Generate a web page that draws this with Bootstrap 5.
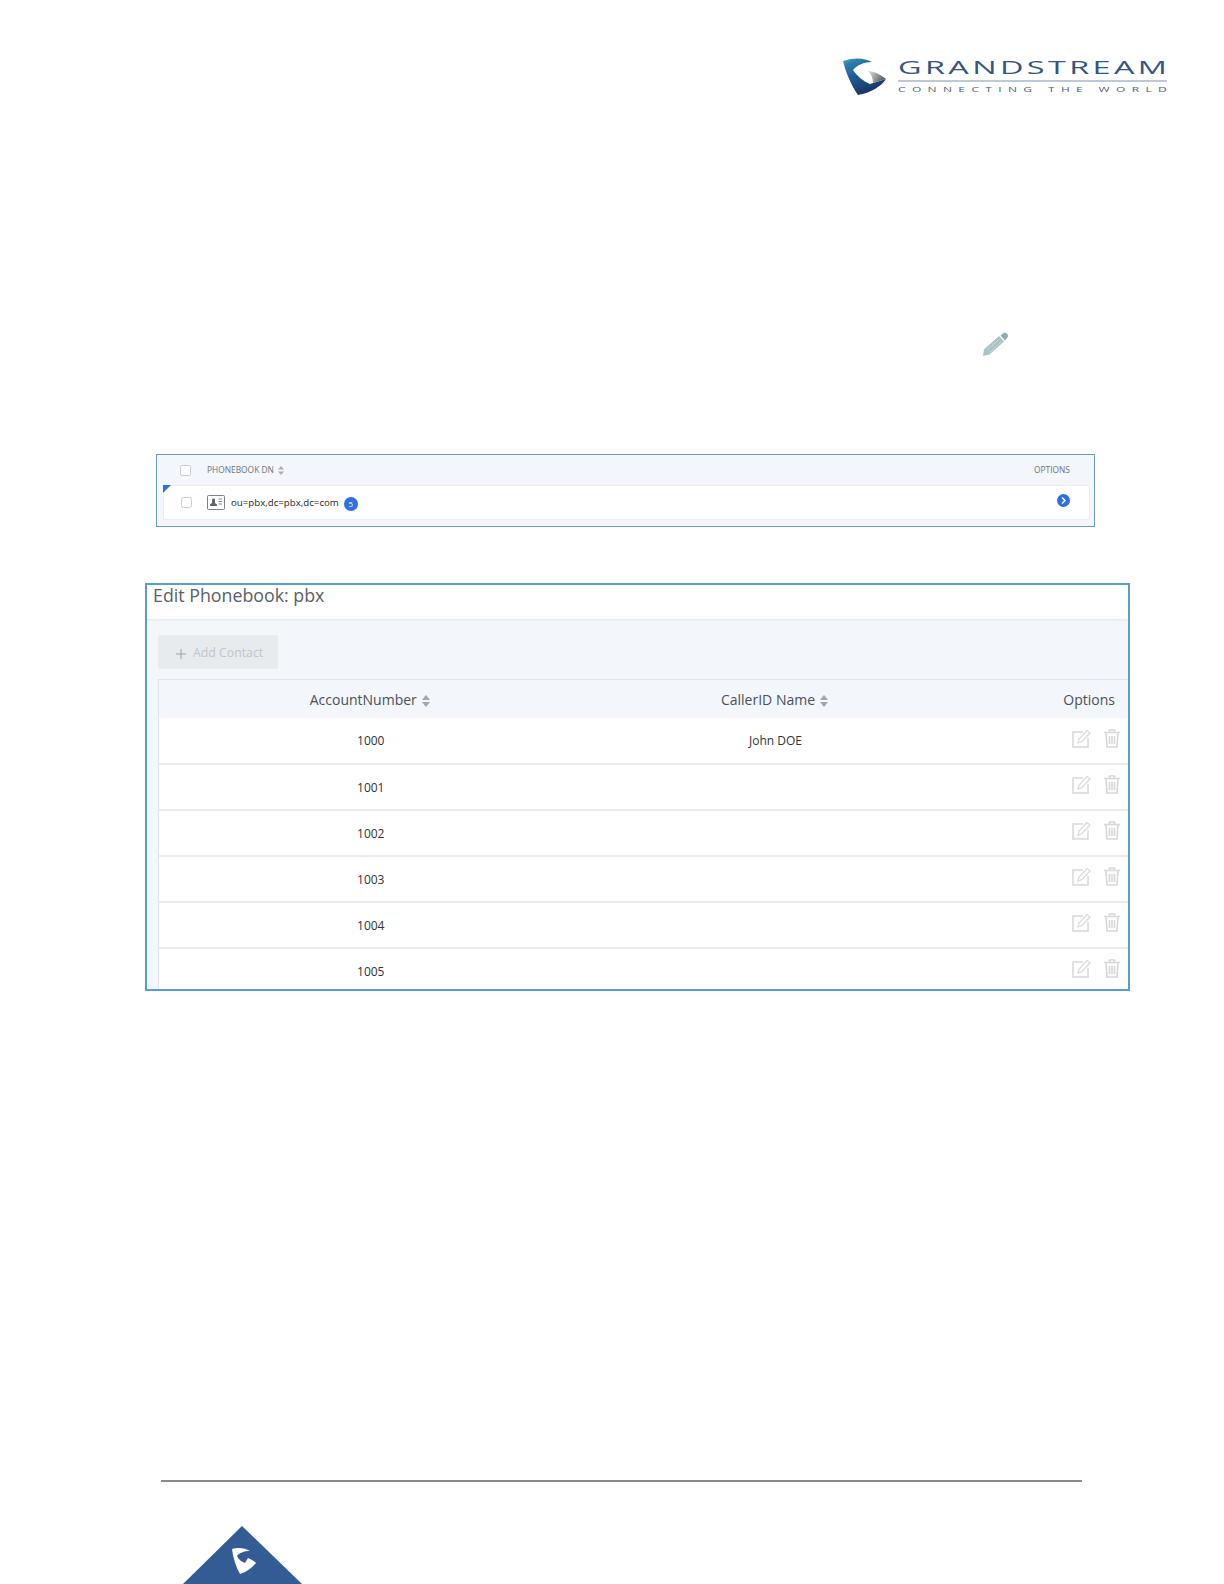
<!DOCTYPE html>
<html lang="en">
<head>
<meta charset="utf-8">
<title>Edit Phonebook</title>
<link href="https://cdn.jsdelivr.net/npm/bootstrap@5.3.0/dist/css/bootstrap.min.css" rel="stylesheet">
<style>
html,body{margin:0;background:#fff}
.sheet{width:1224px;height:1584px;overflow:hidden;font-family:"Open Sans","Liberation Sans",sans-serif;padding-top:52px}
.logo-wrap{margin-left:840px;height:46px}
.logo-wrap svg{display:block}
.pen-wrap{margin:234px 0 0 983px;height:24px}
.pen-wrap svg,.foot-mark svg{display:block}
.ldap-panel{margin:98px 0 0 156px;width:939px;height:73px;border:1.5px solid #6b9ab8;background:#f3f6fa;padding:0 4px 0 6px}
.ldap-head{height:30px;font-size:8.4px;color:#6d7580}
.ldap-row{position:relative;height:35px;background:#fff;border:1px solid #e8edf2;border-radius:2px;font-size:9.7px;color:#23282d}
.ldap-row::before{content:"";position:absolute;left:-1px;top:-1px;border-style:solid;border-width:8px 8px 0 0;border-color:#2f6fe4 transparent transparent transparent}
.ldap-check{width:11px;height:11px;margin:0 15px 0 17px!important;flex:none;border-color:#c9cdd2;border-radius:1px;background-color:#fff}
.ldap-head .ldap-check{margin:0 16px 0 17px!important}
.ldap-row .ldap-check{margin-top:-1px!important}
.dn-ico{margin-right:6px;flex:none}
.dn-text{margin-top:2px}
.dn-count{width:14px;height:14px;border-radius:50%;background:#2f6fe4;color:#fff;font-size:8px;line-height:14px;text-align:center;margin:3px 0 0 5px}
.opt-cell{margin-left:auto;margin-right:21px;width:35px;text-align:right}
.row-opt{margin:0 19px 5px auto}
.sort-ico{margin-left:5px;flex:none}
.ldap-head .sort-ico{margin-left:4px}
.edit-panel{margin:56px 0 0 145px;width:985px;height:408px;border:2px solid #5b9bd5;background:#f3f6fa;overflow:hidden}
.edit-title{height:35px;background:#fff;border-bottom:1px solid #e9ecef;padding-left:6px;font-size:17.8px;line-height:21px;color:#5a6067;box-shadow:0 1px 2px rgba(0,0,0,.03)}
.edit-body{padding:15px 0 0 11px}
.add-btn{width:120px;height:34px;background:#e8ebee!important;border:0!important;border-radius:2px;color:#bfc5ca!important;opacity:1!important;font-size:12.3px;padding:3px 0 0 18px;margin-bottom:10px}
.add-btn svg{margin-right:7px}
.contact-table{table-layout:fixed;width:970px;margin:0;font-size:12px;border-top:1px solid #dfe4ea;border-left:1px solid #dfe4ea;--bs-table-bg:transparent}
.contact-table th{height:38px;background:#f3f6fa;font-weight:400;font-size:14px;color:#4b5158;text-align:center;vertical-align:middle;padding:1px 4px 0 0;border:0}
.contact-table td{height:46px;background:#fff;color:#2e3338;text-align:center;vertical-align:middle;padding:2px 2px 0 0;border:0;border-bottom:2px solid #e7e9ec}
.contact-table .opts-col{text-align:right}
.contact-table td.opts-col{padding:2px 8px 0 0}
.contact-table td.opts-col svg{margin-left:13px;vertical-align:-1px;position:relative;top:-1px}
.contact-table th.opts-col{padding-right:13px}
.foot-rule{margin:489px 0 0 161px;width:921px;height:2px;background:#8a8a8a;border:0;opacity:1}
.foot-mark{margin:44px 0 0 183px}
</style>
</head>
<body>
<main class="sheet">
  <div class="logo-wrap">
    <svg width="332" height="46" viewBox="0 0 332 46" aria-label="Grandstream logo">
      <defs>
        <linearGradient id="lg1" x1="0" y1="0" x2="0.5" y2="1">
          <stop offset="0" stop-color="#62b3c4"/><stop offset=".16" stop-color="#2d7fae"/><stop offset=".5" stop-color="#1f5b97"/><stop offset="1" stop-color="#163660"/>
        </linearGradient>
        <linearGradient id="lg2" x1="0" y1="0" x2="1" y2="0.4">
          <stop offset="0" stop-color="#e2e4e6"/><stop offset="1" stop-color="#565d63"/>
        </linearGradient>
      </defs>
      <path d="M3 9 C14 5 25 6 32 10 C24 10 17 13 13 18 C17 24 23 29 30 32 L46 27 C42 34 30 41 18 43 C11 33 6 21 3 9Z" fill="url(#lg1)"/>
      <path d="M28 19 C34 19 41 23 46 27 C40 29 36 30 33 31 C33 26 31 22 28 19Z" fill="url(#lg2)"/>
      <text transform="translate(58 22) scale(1.8 1)" textLength="149.400" lengthAdjust="spacing" font-family="Open Sans" font-weight="400" font-size="18" fill="#35557f">GRANDSTREAM</text>
      <rect x="58" y="28.500" width="269" height="1" fill="#7f93ab"/>
      <text transform="translate(58 40) scale(1.6 1)" textLength="168" lengthAdjust="spacing" font-family="Open Sans" font-weight="400" font-size="7.500" fill="#4d5f76">CONNECTING THE WORLD</text>
    </svg>
  </div>

  <div class="pen-wrap">
    <svg width="26" height="24" viewBox="0 0 26 24" aria-hidden="true">
      <path d="M0 24 L1 17.500 L16 4 L21 9.500 L6.500 22.500Z" fill="#a7c3c6"/>
      <path d="M17.500 3.500 L20.500 1 C23 -.5 26.500 3 24.500 5.500 L22 8.500Z" fill="#8eacb1"/>
      <path d="M4.500 17.500 L16.500 7 M7 20 L18.500 9.500" stroke="#d5e3e4" stroke-width="1" stroke-dasharray="2 1"/>
    </svg>
  </div>

  <section class="ldap-panel">
    <div class="ldap-head d-flex align-items-center">
      <input class="form-check-input ldap-check" type="checkbox" aria-label="Select all">
      <span>PHONEBOOK DN</span>
      <svg class="sort-ico" width="6" height="9" viewBox="0 0 6 9" aria-hidden="true"><path d="M3 0 6 3.500H0ZM3 9 0 5.500H6Z" fill="#a8aeb5"/></svg>
      <span class="opt-cell">OPTIONS</span>
    </div>
    <div class="ldap-row d-flex align-items-center">
      <input class="form-check-input ldap-check" type="checkbox" aria-label="Select row">
      <svg class="dn-ico" width="18" height="15" viewBox="0 0 18 15" aria-hidden="true">
        <rect x=".5" y=".5" width="17" height="14" rx="1" fill="#fff" stroke="#7d8287"/>
        <path d="M3 11V9.500L5 8V4.500C5 3 8 3 8 4.500V8L10 9.500V11Z" fill="#5f656b"/>
        <path d="M11.500 4h3.500M11.500 6.500h3.500M11.500 9h3.500" stroke="#7d8287"/>
      </svg>
      <span class="dn-text">ou=pbx,dc=pbx,dc=com</span>
      <span class="dn-count">5</span>
      <svg class="row-opt" width="13" height="13" viewBox="0 0 13 13" aria-hidden="true"><circle cx="6.500" cy="6.500" r="6.500" fill="#2f6fe4"/><path d="M5 3.500 8 6.500 5 9.500" fill="none" stroke="#fff" stroke-width="1.500"/></svg>
    </div>
  </section>

  <section class="edit-panel">
    <div class="edit-title">Edit Phonebook: pbx</div>
    <div class="edit-body">
      <button class="btn add-btn d-flex align-items-center" type="button" disabled>
        <svg width="10" height="10" viewBox="0 0 10 10" aria-hidden="true"><path d="M5 0V10M0 5H10" stroke="#9aa0a6" stroke-width="1"/></svg>Add Contact
      </button>
      <table class="table contact-table">
        <colgroup><col style="width:426px"><col style="width:384px"><col></colgroup>
        <thead>
          <tr>
            <th>AccountNumber<svg class="sort-ico" width="8" height="12" viewBox="0 0 8 12" aria-hidden="true"><path d="M4 0 8 5H0ZM4 12 0 7H8Z" fill="#a0a6ad"/></svg></th>
            <th>CallerID Name<svg class="sort-ico" width="8" height="12" viewBox="0 0 8 12" aria-hidden="true"><path d="M4 0 8 5H0ZM4 12 0 7H8Z" fill="#a0a6ad"/></svg></th>
            <th class="opts-col">Options</th>
          </tr>
        </thead>
        <tbody>
          <tr><td>1000</td><td>John DOE</td><td class="opts-col"><svg width="19" height="19" viewBox="0 0 19 19" aria-hidden="true"><path d="M11 3H1V18H16V9" fill="none" stroke="#d6d8da" stroke-width="1.500"/><path d="M6 14 7 10 15 1.500 18 4 10 12.500Z" fill="none" stroke="#d6d8da" stroke-width="1.200"/></svg><svg width="16" height="19" viewBox="0 0 16 19" aria-hidden="true"><path d="M0 3.500H16M5.500 3V1H10.500V3M2 4 3 18H13L14 4M5.500 7V15M8 7V15M10.500 7V15" fill="none" stroke="#d6d8da" stroke-width="1.600"/></svg></td></tr>
          <tr><td>1001</td><td></td><td class="opts-col"><svg width="19" height="19" viewBox="0 0 19 19" aria-hidden="true"><path d="M11 3H1V18H16V9" fill="none" stroke="#d6d8da" stroke-width="1.500"/><path d="M6 14 7 10 15 1.500 18 4 10 12.500Z" fill="none" stroke="#d6d8da" stroke-width="1.200"/></svg><svg width="16" height="19" viewBox="0 0 16 19" aria-hidden="true"><path d="M0 3.500H16M5.500 3V1H10.500V3M2 4 3 18H13L14 4M5.500 7V15M8 7V15M10.500 7V15" fill="none" stroke="#d6d8da" stroke-width="1.600"/></svg></td></tr>
          <tr><td>1002</td><td></td><td class="opts-col"><svg width="19" height="19" viewBox="0 0 19 19" aria-hidden="true"><path d="M11 3H1V18H16V9" fill="none" stroke="#d6d8da" stroke-width="1.500"/><path d="M6 14 7 10 15 1.500 18 4 10 12.500Z" fill="none" stroke="#d6d8da" stroke-width="1.200"/></svg><svg width="16" height="19" viewBox="0 0 16 19" aria-hidden="true"><path d="M0 3.500H16M5.500 3V1H10.500V3M2 4 3 18H13L14 4M5.500 7V15M8 7V15M10.500 7V15" fill="none" stroke="#d6d8da" stroke-width="1.600"/></svg></td></tr>
          <tr><td>1003</td><td></td><td class="opts-col"><svg width="19" height="19" viewBox="0 0 19 19" aria-hidden="true"><path d="M11 3H1V18H16V9" fill="none" stroke="#d6d8da" stroke-width="1.500"/><path d="M6 14 7 10 15 1.500 18 4 10 12.500Z" fill="none" stroke="#d6d8da" stroke-width="1.200"/></svg><svg width="16" height="19" viewBox="0 0 16 19" aria-hidden="true"><path d="M0 3.500H16M5.500 3V1H10.500V3M2 4 3 18H13L14 4M5.500 7V15M8 7V15M10.500 7V15" fill="none" stroke="#d6d8da" stroke-width="1.600"/></svg></td></tr>
          <tr><td>1004</td><td></td><td class="opts-col"><svg width="19" height="19" viewBox="0 0 19 19" aria-hidden="true"><path d="M11 3H1V18H16V9" fill="none" stroke="#d6d8da" stroke-width="1.500"/><path d="M6 14 7 10 15 1.500 18 4 10 12.500Z" fill="none" stroke="#d6d8da" stroke-width="1.200"/></svg><svg width="16" height="19" viewBox="0 0 16 19" aria-hidden="true"><path d="M0 3.500H16M5.500 3V1H10.500V3M2 4 3 18H13L14 4M5.500 7V15M8 7V15M10.500 7V15" fill="none" stroke="#d6d8da" stroke-width="1.600"/></svg></td></tr>
          <tr><td>1005</td><td></td><td class="opts-col"><svg width="19" height="19" viewBox="0 0 19 19" aria-hidden="true"><path d="M11 3H1V18H16V9" fill="none" stroke="#d6d8da" stroke-width="1.500"/><path d="M6 14 7 10 15 1.500 18 4 10 12.500Z" fill="none" stroke="#d6d8da" stroke-width="1.200"/></svg><svg width="16" height="19" viewBox="0 0 16 19" aria-hidden="true"><path d="M0 3.500H16M5.500 3V1H10.500V3M2 4 3 18H13L14 4M5.500 7V15M8 7V15M10.500 7V15" fill="none" stroke="#d6d8da" stroke-width="1.600"/></svg></td></tr>
        </tbody>
      </table>
    </div>
  </section>

  <hr class="foot-rule">
  <div class="foot-mark">
    <svg width="119" height="58" viewBox="0 0 119 58" aria-hidden="true">
      <path d="M59 0 119 58H0Z" fill="#335c94"/>
      <path d="M49 23 C55 21 62 22 67 25 C61 25 56 27 54 30 C56 34 59 36 62 37 L65 32 C68 33 71 35 73 37 C69 42 63 46 57 48 C53 41 50 32 49 23Z" fill="#fff"/>
    </svg>
  </div>
</main>
<script src="https://cdn.jsdelivr.net/npm/bootstrap@5.3.0/dist/js/bootstrap.bundle.min.js"></script>
</body>
</html>
